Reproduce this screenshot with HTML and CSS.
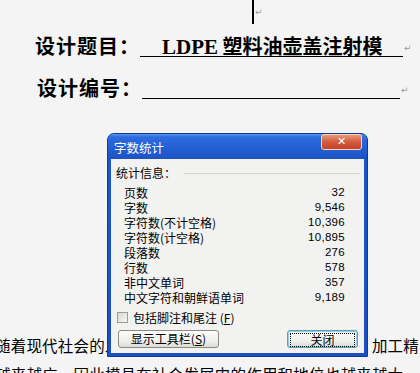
FILE: index.html
```html
<!DOCTYPE html>
<html lang="zh-CN">
<head>
  <meta charset="UTF-8">
  <title>字数统计</title>
  <link rel="stylesheet" href="styles.css">
</head>
<body>

  <div class="doc">
    <div class="caret-line">
      <span class="caret"></span><span class="mark">↵</span>
    </div>

    <div class="field">
      <span class="field-label">设计题目：</span>
      <span class="field-line"><span class="latin">LDPE</span> 塑料油壶盖注射模</span>
      <span class="mark">↵</span>
    </div>

    <div class="field field-code">
      <span class="field-label">设计编号：</span>
      <span class="field-line"></span>
      <span class="mark">↵</span>
    </div>

    <div class="empty-line"><span class="mark">↵</span></div>

    <div class="text">
      <div class="text-line split">
        <span>随着现代社会的发</span>
        <span>加工精</span>
      </div>
      <div class="text-line">越来越广，因此模具在社会发展中的作用和地位也越来越大</div>
    </div>
  </div>

  <div class="dialog">
    <div class="titlebar">
      <span class="title">字数统计</span>
      <span class="close-btn">✕</span>
    </div>
    <div class="dialog-body">
      <div class="group-head">
        <span>统计信息：</span>
        <span class="group-rule"></span>
      </div>
      <div class="stats">
        <div class="stat"><span>页数</span><span class="num">32</span></div>
        <div class="stat"><span>字数</span><span class="num">9,546</span></div>
        <div class="stat"><span>字符数(不计空格)</span><span class="num">10,396</span></div>
        <div class="stat"><span>字符数(计空格)</span><span class="num">10,895</span></div>
        <div class="stat"><span>段落数</span><span class="num">276</span></div>
        <div class="stat"><span>行数</span><span class="num">578</span></div>
        <div class="stat"><span>非中文单词</span><span class="num">357</span></div>
        <div class="stat"><span>中文字符和朝鲜语单词</span><span class="num">9,189</span></div>
      </div>
      <label class="check-row">
        <span class="checkbox"></span>
        <span>包括脚注和尾注 (<u>F</u>)</span>
      </label>
      <div class="button-row">
        <button class="btn btn-toolbar">显示工具栏(<u>S</u>)</button>
        <button class="btn btn-close"><span class="focus">关闭</span></button>
      </div>
    </div>
  </div>

</body>
</html>
```

FILE: styles.css
```css
html, body {
  margin: 0;
  width: 420px;
  height: 373px;
  overflow: hidden;
}

body {
  position: relative;
  background-color: #f4f4f4;
  font-family: "Noto Sans CJK SC", sans-serif;
  color: #000;
}

.mark {
  font-family: "DejaVu Sans", sans-serif;
  font-size: 9px;
  font-weight: normal;
  color: #9a9a9a;
  line-height: 10px;
}

/* document */

.caret-line {
  height: 24px;
  padding-left: 252px;
  display: flex;
  align-items: flex-start;
}

.caret {
  display: block;
  width: 2px;
  height: 24px;
  background-color: #000;
}

.caret-line .mark {
  margin: 7px 0 0 1px;
}

.field {
  display: flex;
  align-items: flex-end;
  height: 23px;
  margin-top: 10px;
  padding-left: 35px;
  font-size: 20px;
  font-weight: bold;
}

.field-label {
  width: 105px;
  line-height: 23px;
  letter-spacing: 1px;
}

.field-line {
  width: 263px;
  height: 22px;
  line-height: 22px;
  padding-left: 22px;
  box-sizing: border-box;
  border-bottom: 1px solid #000;
  white-space: nowrap;
}

.latin {
  font-family: "Liberation Serif", serif;
  font-size: 21px;
}

.field .mark {
  margin: 0 0 4px 1px;
}

.field-code {
  margin-top: 19px;
  padding-left: 37px;
}

.field-code .field-line {
  width: 258px;
}

.empty-line {
  height: 16px;
  margin-top: 22px;
  padding-left: 253px;
}

.text {
  margin-top: 194px;
  font-size: 15.5px;
  letter-spacing: 0.2px;
}

.text-line {
  height: 29px;
  line-height: 29px;
  margin-left: -5px;
  white-space: nowrap;
}

.text-line.split {
  width: 424px;
  display: flex;
  justify-content: space-between;
}

/* dialog */

.dialog {
  position: absolute;
  left: 107px;
  top: 133px;
  width: 261px;
  height: 224px;
  box-sizing: border-box;
  padding: 0 3px 3px 3px;
  border-radius: 7px 7px 0 0;
  background: linear-gradient(#2f6fe0, #1d55c8 30px, #1c4fbf);
  border: 1px solid #0d3a9e;
  display: flex;
  flex-direction: column;
}

.titlebar {
  position: relative;
  height: 25px;
  display: flex;
  align-items: center;
  border-radius: 6px 6px 0 0;
  margin: 0 -3px;
  padding: 0 6px;
  background: linear-gradient(#5b95ee 0, #2e6be0 3px, #2561d6 50%, #1d52c2 100%);
}

.title {
  color: #fff;
  font-size: 12.5px;
  padding-top: 1px;
}

.close-btn {
  position: absolute;
  right: 5px;
  top: 0;
  width: 41px;
  height: 16px;
  box-sizing: border-box;
  border: 1px solid #f6d2c4;
  border-radius: 3px;
  background: linear-gradient(#e9997c, #d35a3c 50%, #c44326);
  color: #fff;
  font-family: "DejaVu Sans", sans-serif;
  font-weight: bold;
  font-size: 11px;
  line-height: 14px;
  text-align: center;
}

.dialog-body {
  flex: 1;
  background-color: #f2f2f0;
  padding: 7px 4px 0 5px;
  font-size: 12px;
}

.group-head {
  display: flex;
  align-items: center;
  height: 14px;
  line-height: 14px;
}

.group-rule {
  flex: 1;
  height: 1px;
  margin-left: 8px;
  background-color: #d4d4d0;
}

.stats {
  margin-top: 5px;
  padding: 0 15px 0 8px;
}

.stat {
  display: flex;
  justify-content: space-between;
  height: 15px;
  line-height: 15px;
}

.num {
  font-family: "Liberation Sans", sans-serif;
  font-size: 11.5px;
  letter-spacing: 0.3px;
}

.check-row {
  display: flex;
  align-items: center;
  height: 14px;
  margin-top: 5px;
  padding-left: 1px;
}

.checkbox {
  width: 11px;
  height: 11px;
  box-sizing: border-box;
  border: 1px solid #9c9c9c;
  background: linear-gradient(135deg, #d8d8d4, #f6f6f4);
  margin-right: 5px;
}

.button-row {
  display: flex;
  justify-content: space-between;
  margin-top: 6px;
  padding: 0 2px 0 2px;
}

.btn {
  height: 18px;
  box-sizing: border-box;
  border: 1px solid #8a8a88;
  border-radius: 3px;
  background: linear-gradient(#fdfdfc, #f0f0ec 60%, #dcdcd6);
  font-family: "Noto Sans CJK SC", sans-serif;
  font-size: 12px;
  line-height: 14px;
  padding: 0;
  color: #000;
}

.btn-toolbar {
  width: 101px;
}

.btn-close {
  width: 71px;
  border-color: #5d9fbf;
  box-shadow: inset 0 0 0 1px #8fd0e6;
  padding: 2px;
}

.focus {
  display: block;
  height: 12px;
  line-height: 12px;
  border: 1px dotted #000;
}
```
